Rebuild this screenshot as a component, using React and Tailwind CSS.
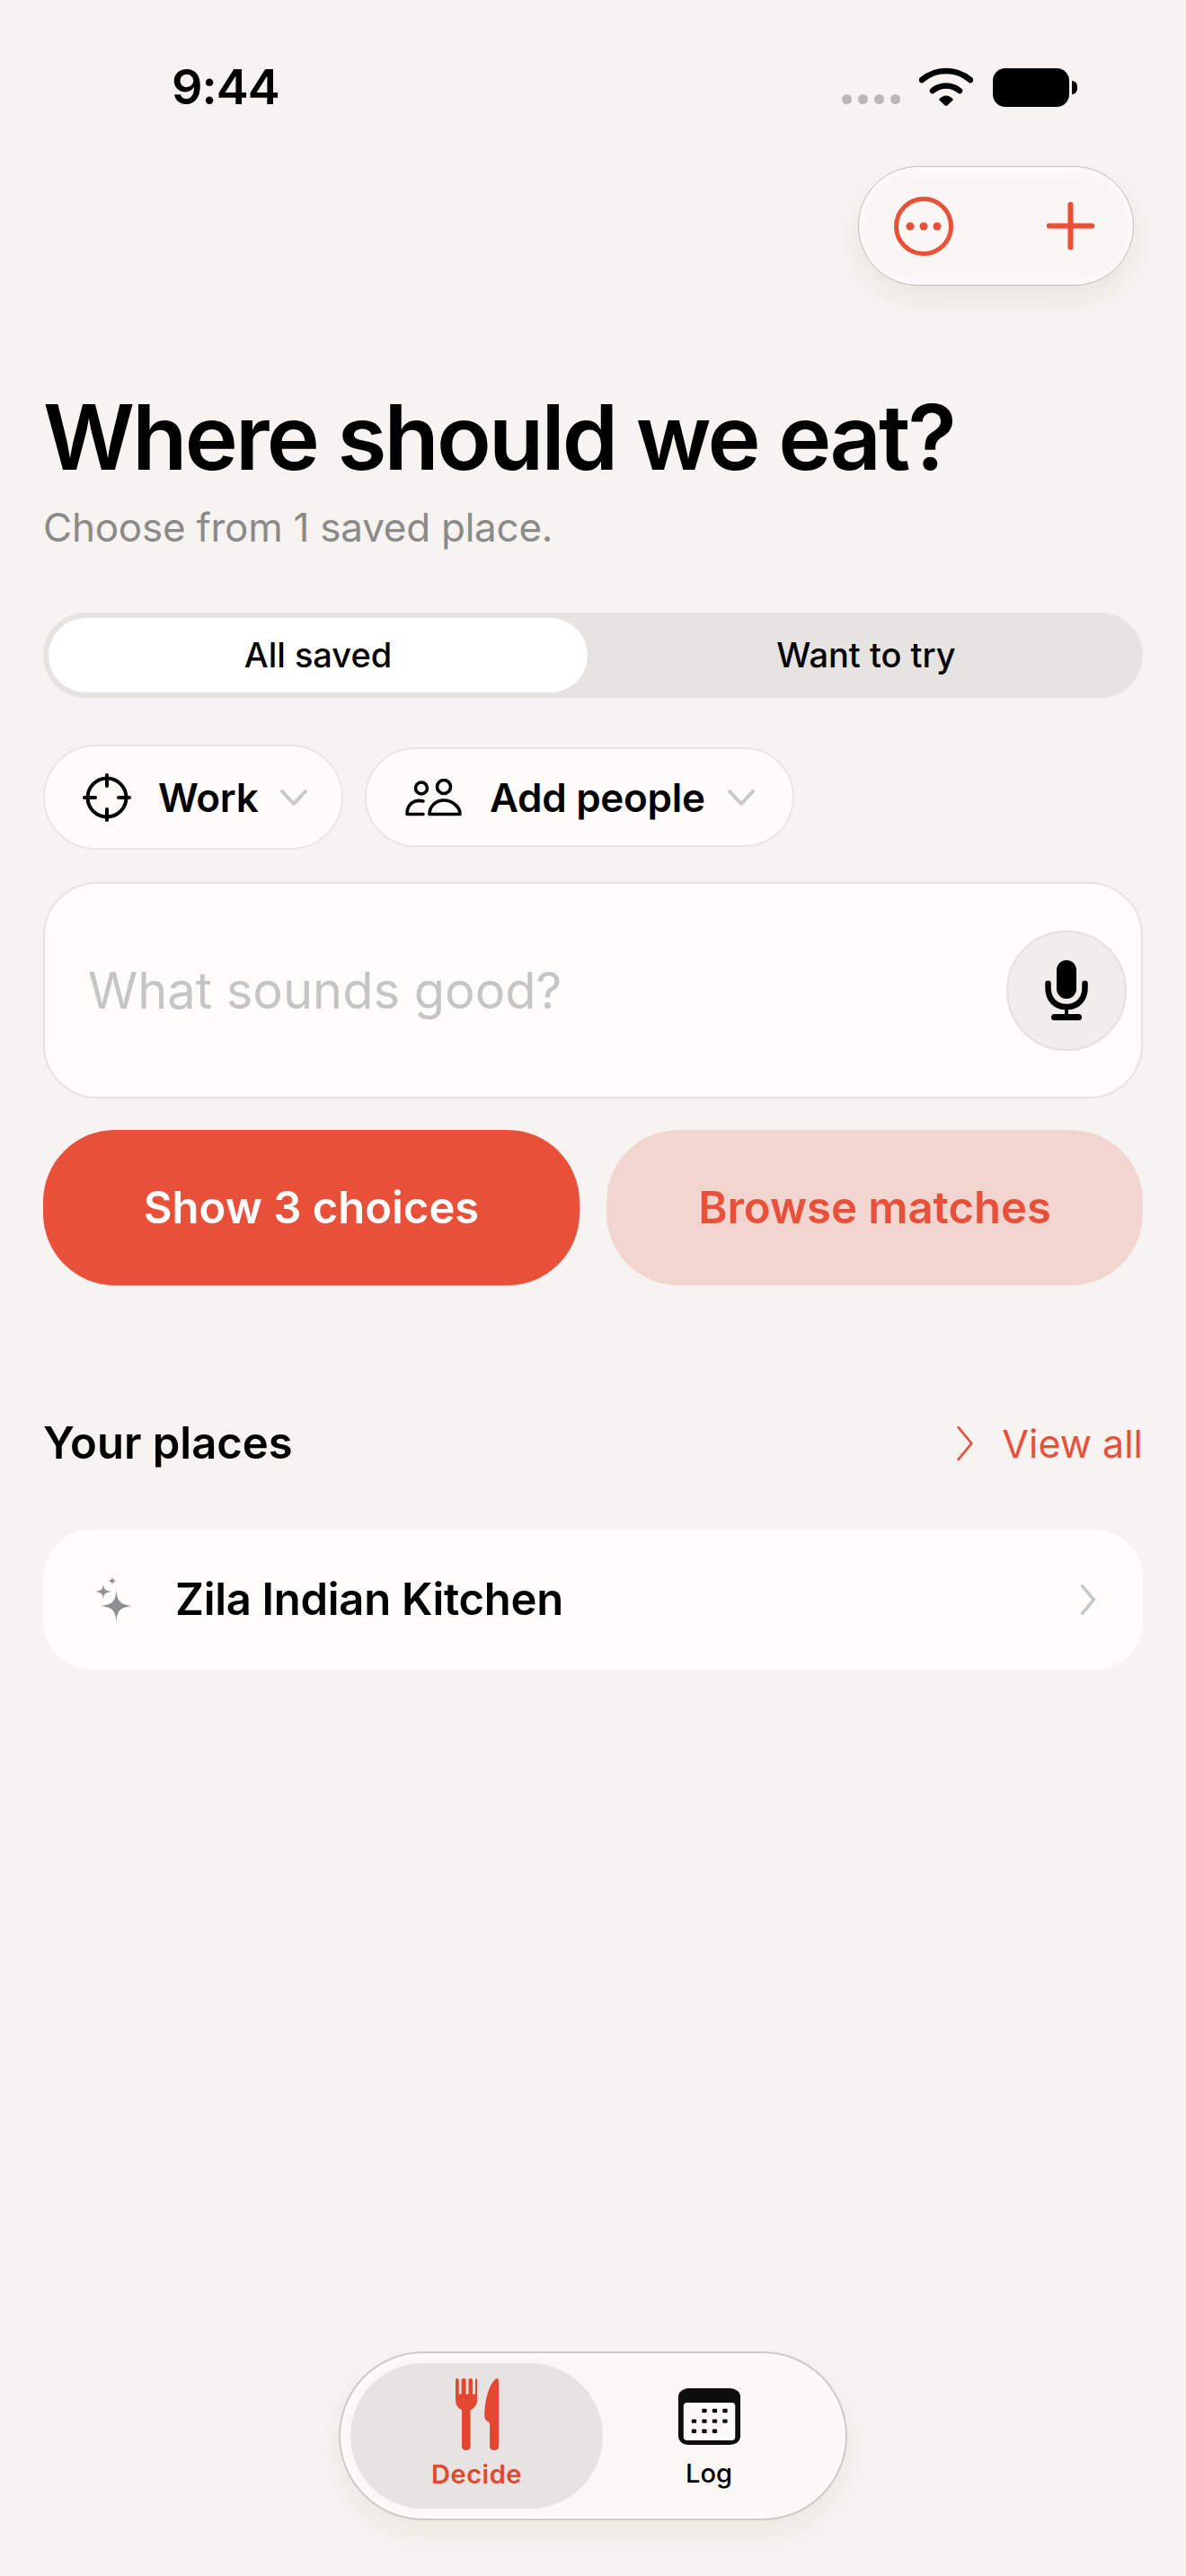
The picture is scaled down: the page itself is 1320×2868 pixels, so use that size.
import { Plus } from "lucide-react";

const font = { fontFamily: "Inter, 'Liberation Sans', sans-serif" };

function Wifi() {
  return (
    <svg width="60" height="44" viewBox="0 0 60 44" className="mt-[3px]">
      <path d="M3 15C18 1.500 42 1.500 57 15" fill="none" stroke="#000" strokeWidth="6.500" strokeLinecap="round" />
      <path d="M15 27C23 19.500 37 19.500 45 27" fill="none" stroke="#000" strokeWidth="6.500" strokeLinecap="round" />
      <path d="M22 37C26 31 34 31 38 37L31.500 43.200C30.600 44 29.400 44 28.500 43.200Z" fill="#000" />
    </svg>
  );
}

function Battery() {
  return (
    <div className="flex items-center mt-[5px]">
      <div className="w-[85px] h-[43px] rounded-[14px] bg-black" />
      <div className="w-[6px] h-[15px] ml-[3px] rounded-r-full bg-black" />
    </div>
  );
}

function StatusBar() {
  return (
    <div className="flex justify-between items-start h-[185px] pt-[71px] pl-[191px] pr-[121px]">
      <div className="text-[54px] leading-[52px] font-semibold text-black tracking-[-1px]">9:44</div>
      <div className="flex items-start">
        <div className="flex gap-[7px] mt-[34px] mr-[21px]">
          <span className="w-[11px] h-[11px] rounded-full bg-[#b9b8b5]" />
          <span className="w-[11px] h-[11px] rounded-full bg-[#b9b8b5]" />
          <span className="w-[11px] h-[11px] rounded-full bg-[#b9b8b5]" />
          <span className="w-[11px] h-[11px] rounded-full bg-[#b9b8b5]" />
        </div>
        <Wifi />
        <div className="w-[22px]" />
        <Battery />
      </div>
    </div>
  );
}

function MoreCircle() {
  return (
    <svg width="66" height="66" viewBox="0 0 66 66">
      <circle cx="33" cy="33" r="30.500" fill="none" stroke="#e8503a" strokeWidth="5" />
      <circle cx="18" cy="33" r="4.500" fill="#e8503a" />
      <circle cx="33" cy="33" r="4.500" fill="#e8503a" />
      <circle cx="48" cy="33" r="4.500" fill="#e8503a" />
    </svg>
  );
}

function Crosshair() {
  return (
    <svg width="54" height="54" viewBox="0 0 54 54" fill="none" stroke="#000" strokeWidth="4" strokeLinecap="round">
      <circle cx="27" cy="27" r="21.500" />
      <path d="M27 2V14M27 40V52M2 27H14M40 27H52" />
    </svg>
  );
}

function People() {
  return (
    <svg width="64" height="42" viewBox="0 0 64 42" fill="none" stroke="#000" strokeWidth="3.600" strokeLinejoin="round" strokeLinecap="round">
      <circle cx="18" cy="10.500" r="6.500" />
      <circle cx="43" cy="9" r="7.500" />
      <path d="M27 39.500C27 31 34 24 43 24C52 24 61 31 61 39.500Z" />
      <path d="M20 25C10 22.500 2 28 2 39.500H20" />
    </svg>
  );
}

function ChevronDown({ className }) {
  return (
    <svg width="32" height="20" viewBox="0 0 32 20" fill="none" stroke="#c9c8cb" strokeWidth="4" strokeLinecap="round" strokeLinejoin="round" className={className}>
      <path d="M3 3L16 17L29 3" />
    </svg>
  );
}

function Mic() {
  return (
    <svg width="48" height="68" viewBox="0 0 48 68">
      <rect x="13" y="0" width="22" height="43" rx="11" fill="#000" />
      <path d="M3.500 26V31C3.500 44 12 52 24 52C36 52 44.500 44 44.500 31V26" fill="none" stroke="#000" strokeWidth="6.500" strokeLinecap="round" />
      <rect x="22" y="52" width="4" height="12" fill="#000" />
      <rect x="7" y="60" width="34" height="7" rx="3.500" fill="#000" />
    </svg>
  );
}

function Sparkles() {
  return (
    <svg width="44" height="56" viewBox="0 0 44 56" fill="#8e8e93">
      <path d="M25.500 17C26.300 29 29 33.500 43 35C29 36.500 26.300 41 25.500 53C24.700 41 22 36.500 8 35C22 33.500 24.700 29 25.500 17Z" />
      <path d="M11 10C11.400 16 12.500 18 20 19C12.500 20 11.400 22 11 28C10.600 22 9.500 20 2 19C9.500 18 10.600 16 11 10Z" />
      <path d="M21 2C21.200 5 22 6.300 26 7C22 7.700 21.200 9 21 12C20.800 9 20 7.700 16 7C20 6.300 20.800 5 21 2Z" />
    </svg>
  );
}

function ForkKnife() {
  return (
    <svg width="48" height="80" viewBox="0 0 116 238" preserveAspectRatio="none" fill="#e2472f">
      <path d="M4 0C7 0 9 2 9 6V50C9 54 16 54 16 50V6C16 2 18 0 22 0C26 0 28 2 28 6V50C28 54 35 54 35 50V6C35 2 37 0 40 0C44 0 46 2 46 6V50C46 54 53 54 53 50V6C53 2 55 0 58 0V72C58 90 48 100 40 105V226C40 233 35 238 29 238C23 238 17 233 17 226V105C9 100 0 90 0 72V6C0 2 1 0 4 0Z" />
      <path d="M110 0C114 0 116 3 116 8V226C116 233 111 238 104 238C97 238 92 233 92 226V152C92 148 90 145 87 143C81 139 78 134 78 126C78 70 92 14 110 0Z" />
    </svg>
  );
}

function CalendarIcon() {
  const dots = [
    [70, 25], [98, 25], [126, 25],
    [42, 60], [70, 60], [98, 60], [126, 60],
    [42, 93], [70, 93], [98, 93],
  ];
  return (
    <svg width="69" height="63" viewBox="0 0 168 188" preserveAspectRatio="none">
      <rect width="168" height="188" rx="28" fill="#0d0d0c" />
      <rect x="14" y="48" width="140" height="125" rx="10" fill="#fdfbf9" />
      {dots.map(([x, y], i) => (
        <rect key={i} x={x - 6} y={y + 43} width="13" height="13" rx="3" fill="#0d0d0c" />
      ))}
    </svg>
  );
}

function Chevron({ stroke, width, height, sw }) {
  return (
    <svg width={width} height={height} viewBox="0 0 20 38" fill="none" stroke={stroke} strokeWidth={sw} strokeLinecap="round" strokeLinejoin="round">
      <path d="M3 2L17 19L3 36" />
    </svg>
  );
}

export default function App() {
  return (
    <div style={font} className="w-[1320px] h-[2868px] flex flex-col bg-[#f6f3f0] text-black overflow-hidden">
      <StatusBar />

      <div className="flex flex-col px-[48px]">
        <div className="flex justify-end pr-[10px]">
          <div className="w-[307px] h-[133px] rounded-full flex items-center justify-between pl-[39px] pr-[29px] bg-[#f9f6f3] border border-[#bfbcb9] shadow-[0_14px_30px_rgba(60,50,40,0.07),inset_0_3px_8px_rgba(255,255,255,0.95),inset_0_-3px_8px_rgba(255,255,255,0.9)]">
            <MoreCircle />
            <Plus size={81} color="#e8503a" strokeWidth={1.8} />
          </div>
        </div>

        <h1 className="mt-[111px] text-[100px] leading-[116px] font-semibold tracking-[-2.800px] text-black">Where should we eat?</h1>
        <p className="mt-[14px] text-[44px] leading-[56px] tracking-[-0.250px] text-[#8b8a88]">Choose from 1 saved place.</p>

        <div className="mt-[67px] h-[95px] flex rounded-full bg-[#e6e3e1] p-[6px]">
          <div className="w-[600px] rounded-full bg-white flex items-center justify-center text-[38px] font-medium">All saved</div>
          <div className="flex-1 flex items-center justify-center pl-[8px] text-[38px] font-medium">Want to try</div>
        </div>

        <div className="mt-[52px] flex items-center gap-[24px] h-[117px]">
          <div className="w-[334px] h-[117px] rounded-full bg-[#fdfcfa] border-2 border-[#e8e6e3] flex items-center pl-[42px]">
            <Crosshair />
            <span className="ml-[30px] text-[44px] font-semibold tracking-[-0.300px]">Work</span>
            <ChevronDown className="ml-[24px]" />
          </div>
          <div className="w-[478px] h-[111px] rounded-full bg-[#fdfcfa] border-2 border-[#e8e6e3] flex items-center pl-[43px]">
            <People />
            <span className="ml-[30px] text-[44px] font-semibold tracking-[-0.300px]">Add people</span>
            <ChevronDown className="ml-[24px]" />
          </div>
        </div>

        <div className="mt-[36px] h-[241px] rounded-[60px] bg-[#fefdfb] border-2 border-[#e6e4e1] flex items-center justify-between pl-[48px] pr-[16px]">
          <span className="text-[56px] text-[#c6c5c6]">What sounds good?</span>
          <div className="w-[134px] h-[134px] rounded-full bg-[#f1edea] border-2 border-[#e3e0dd] flex items-center justify-center">
            <Mic />
          </div>
        </div>

        <div className="mt-[35px] grid grid-cols-2 gap-[30px]">
          <div className="h-[173px] rounded-[80px] bg-[#e9503a] flex items-center justify-center text-[49px] font-semibold text-white">Show 3 choices</div>
          <div className="h-[173px] rounded-[80px] bg-[#f3d5cf] flex items-center justify-center text-[49px] font-semibold text-[#e8503a]">Browse matches</div>
        </div>

        <div className="mt-[146px] flex items-center justify-between h-[60px]">
          <span className="text-[49px] font-semibold">Your places</span>
          <div className="flex items-center gap-[30px] text-[43px] text-[#e8503a]">
            <Chevron stroke="#e8503a" width={22} height={40} sw={2.600} />
            <span>View all</span>
          </div>
        </div>

        <div className="mt-[66px] h-[156px] rounded-[54px] bg-[#fefdfb] flex items-center pl-[56px] pr-[52px]">
          <Sparkles />
          <span className="ml-[47px] text-[49px] font-semibold tracking-[-0.300px]">Zila Indian Kitchen</span>
          <div className="ml-auto">
            <Chevron stroke="#c7c7cb" width={18} height={34} sw={4} />
          </div>
        </div>
      </div>

      <div className="mt-auto mb-[62px] self-center w-[566px] h-[188px] rounded-full flex items-center pl-[11px] bg-[#faf7f4] border-2 border-[#cdcac7] shadow-[0_14px_30px_rgba(60,50,40,0.06),inset_0_3px_8px_rgba(255,255,255,0.95),inset_0_-3px_8px_rgba(255,255,255,0.95)]">
        <div className="w-[281px] h-[162px] rounded-full bg-[#e6e3e0] flex flex-col items-center pt-[17px]">
          <ForkKnife />
          <span className="mt-[10px] text-[29px] leading-[34px] font-semibold tracking-[0.500px] text-[#e2472f]">Decide</span>
        </div>
        <div className="ml-[43px] w-[150px] h-[162px] flex flex-col items-center pt-[28px]">
          <CalendarIcon />
          <span className="mt-[15px] text-[29px] leading-[34px] font-medium">Log</span>
        </div>
      </div>
    </div>
  );
}
